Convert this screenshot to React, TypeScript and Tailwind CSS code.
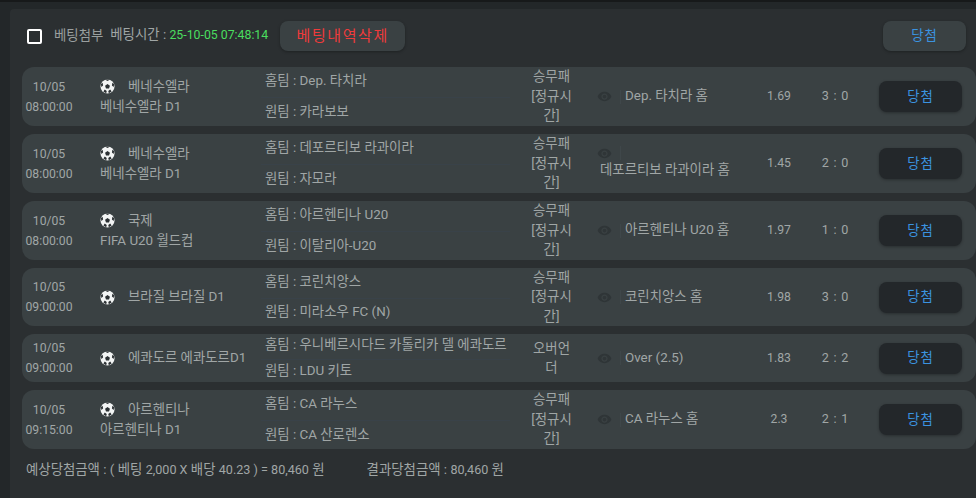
const font = { fontFamily: 'Roboto, "Noto Sans CJK KR", sans-serif' };

interface Bet {
  date: string;
  time: string;
  country: string;
  league?: string;
  home: string;
  away: string;
  market: string;
  pick: string;
  odds: string;
  score: string;
  rowH: string;
  wrapPick?: boolean;
}

const bets: Bet[] = [
  { date: '10/05', time: '08:00:00', country: '베네수엘라', league: '베네수엘라 D1', home: 'Dep. 타치라', away: '카라보보', market: '승무패 [정규시간]', pick: 'Dep. 타치라 홈', odds: '1.69', score: '3 : 0', rowH: 'h-[59px]' },
  { date: '10/05', time: '08:00:00', country: '베네수엘라', league: '베네수엘라 D1', home: '데포르티보 라과이라', away: '자모라', market: '승무패 [정규시간]', pick: '데포르티보 라과이라 홈', odds: '1.45', score: '2 : 0', rowH: 'h-[59px]', wrapPick: true },
  { date: '10/05', time: '08:00:00', country: '국제', league: 'FIFA U20 월드컵', home: '아르헨티나 U20', away: '이탈리아-U20', market: '승무패 [정규시간]', pick: '아르헨티나 U20 홈', odds: '1.97', score: '1 : 0', rowH: 'h-[59px]' },
  { date: '10/05', time: '09:00:00', country: '브라질 브라질 D1', home: '코린치앙스', away: '미라소우 FC (N)', market: '승무패 [정규시간]', pick: '코린치앙스 홈', odds: '1.98', score: '3 : 0', rowH: 'h-[58px]' },
  { date: '10/05', time: '09:00:00', country: '에콰도르 에콰도르D1', home: '우니베르시다드 카톨리카 델 에콰도르', away: 'LDU 키토', market: '오버언더', pick: 'Over (2.5)', odds: '1.83', score: '2 : 2', rowH: 'h-[48px]' },
  { date: '10/05', time: '09:15:00', country: '아르헨티나', league: '아르헨티나 D1', home: 'CA 라누스', away: 'CA 산로렌소', market: '승무패 [정규시간]', pick: 'CA 라누스 홈', odds: '2.3', score: '2 : 1', rowH: 'h-[59px]' },
];

function Ball() {
  return (
    <svg viewBox="0 0 16 16" className="w-[15px] h-[15px] shrink-0">
      <circle cx="8" cy="8" r="7.5" fill="#f2f4f4" />
      <path d="M8 5.2l2.6 1.9-1 3H6.4l-1-3z" fill="#2b3033" />
      <path d="M5.6 .9L8 2.2 10.4 .9 8 .5zM1 5.2l.4 3.4 1.9-1.7-.5-3zM15 5.2l-.4 3.4-1.9-1.7.5-3zM3.6 13.2l3 1.9.6-2.2-2.1-1.6zM12.4 13.2l-3 1.9-.6-2.2 2.1-1.6z" fill="#2b3033" />
    </svg>
  );
}

function EyeIcon() {
  return (
    <svg viewBox="0 0 24 24" className="w-[15px] h-[15px] ml-[24px] fill-[#2f3537]">
      <path d="M12 4.5C7 4.5 2.73 7.61 1 12c1.73 4.39 6 7.5 11 7.5s9.27-3.11 11-7.5c-1.73-4.39-6-7.5-11-7.5zM12 17c-2.76 0-5-2.24-5-5s2.24-5 5-5 5 2.24 5 5-2.24 5-5 5zm0-8c-1.66 0-3 1.34-3 3s1.34 3 3 3 3-1.34 3-3-1.34-3-3-3z" />
    </svg>
  );
}

function Row({ bet }: { bet: Bet }) {
  return (
    <div className={`flex items-center bg-[#3a4143] rounded-[12px] ${bet.rowH}`}>
      <div className="w-[54px] text-center leading-[20px] text-[12.2px]">
        <div>{bet.date}</div>
        <div>{bet.time}</div>
      </div>
      <div className="w-[161px] ml-[24px] leading-[20px]">
        <div className="flex items-center gap-[13px]">
          <Ball />
          <span className="whitespace-nowrap">{bet.country}</span>
        </div>
        {bet.league && <div>{bet.league}</div>}
      </div>
      <div className="w-[249px] self-stretch flex flex-col">
        <div className="flex-1 flex items-center pl-[4px] pb-[2px] border-b border-[#394249] whitespace-nowrap">홈팀 : {bet.home}</div>
        <div className="flex-1 flex items-center pl-[4px] whitespace-nowrap">원팀 : {bet.away}</div>
      </div>
      <div className="w-[43px] ml-[20px] text-center leading-[19.5px]">{bet.market}</div>
      <div className="relative w-[181px] h-full flex items-center">
        <div className={`flex items-center ${bet.wrapPick ? 'mb-[21px]' : ''}`}>
          <EyeIcon />
          <span className="w-px h-[14px] ml-[8px] bg-[#3f474a]" />
        </div>
        {bet.wrapPick ? (
          <span className="absolute left-[27px] top-[26px] whitespace-nowrap">{bet.pick}</span>
        ) : (
          <span className="ml-[4px] whitespace-nowrap">{bet.pick}</span>
        )}
      </div>
      <div className="w-[50px] text-center text-[12.2px]">{bet.odds}</div>
      <div className="w-[62px] text-center text-[12.6px] [word-spacing:1.5px]">{bet.score}</div>
      <button className="ml-[13px] w-[83px] h-[31px] pt-[1px] rounded-[8px] bg-[#23272a] text-[#3b93e0] tracking-[1px] shadow-[0_1px_3px_rgba(0,0,0,0.3)]">당첨</button>
    </div>
  );
}

export default function App() {
  return (
    <div style={font} className="w-[976px] h-[498px] overflow-hidden bg-[#232729] text-[13.4px] text-[#a0a6a6]">
      <div className="h-[2px] bg-[#17191a]" />
      <div className="h-[7px]" />
      <div className="ml-[10px] h-[489px] bg-[#2b2f31] rounded-tl-[4px] pl-[12px]">
        <div className="flex items-center pt-[12px] mb-[16px]">
          <span className="ml-[5px] w-[15px] h-[15px] border-2 border-white rounded-[2px]" />
          <span className="ml-[12px] text-[#9a9f9f]">베팅첨부</span>
          <span className="ml-[7px] mb-[2px]">
            베팅시간 : <span className="text-[#4ade5f] text-[12.3px]">25-10-05 07:48:14</span>
          </span>
          <button className="ml-[12px] w-[125px] h-[30px] rounded-[8px] bg-[#3a4143] text-[#ef3b3b] text-[15px] tracking-[1.6px] shadow-[0_1px_3px_rgba(0,0,0,0.3)]">베팅내역삭제</button>
          <button className="ml-auto mr-[10px] w-[83px] h-[30px] rounded-[8px] bg-[#3a4143] text-[#3b93e0] tracking-[1px] shadow-[0_1px_3px_rgba(0,0,0,0.3)]">당첨</button>
        </div>
        <div className="flex flex-col gap-[8px]">
          {bets.map((b, i) => (
            <Row key={i} bet={b} />
          ))}
        </div>
        <div className="flex mt-[11px] ml-[4px] leading-[20px] whitespace-pre">
          <span>예상당첨금액 : ( 베팅 <span className="text-[12.6px]">2,000 X</span> 배당 <span className="text-[12.6px]">40.23 ) = 80,460</span> 원</span>
          <span className="ml-[42px]">결과당첨금액 : <span className="text-[12.6px]">80,460</span> 원</span>
        </div>
      </div>
    </div>
  );
}
